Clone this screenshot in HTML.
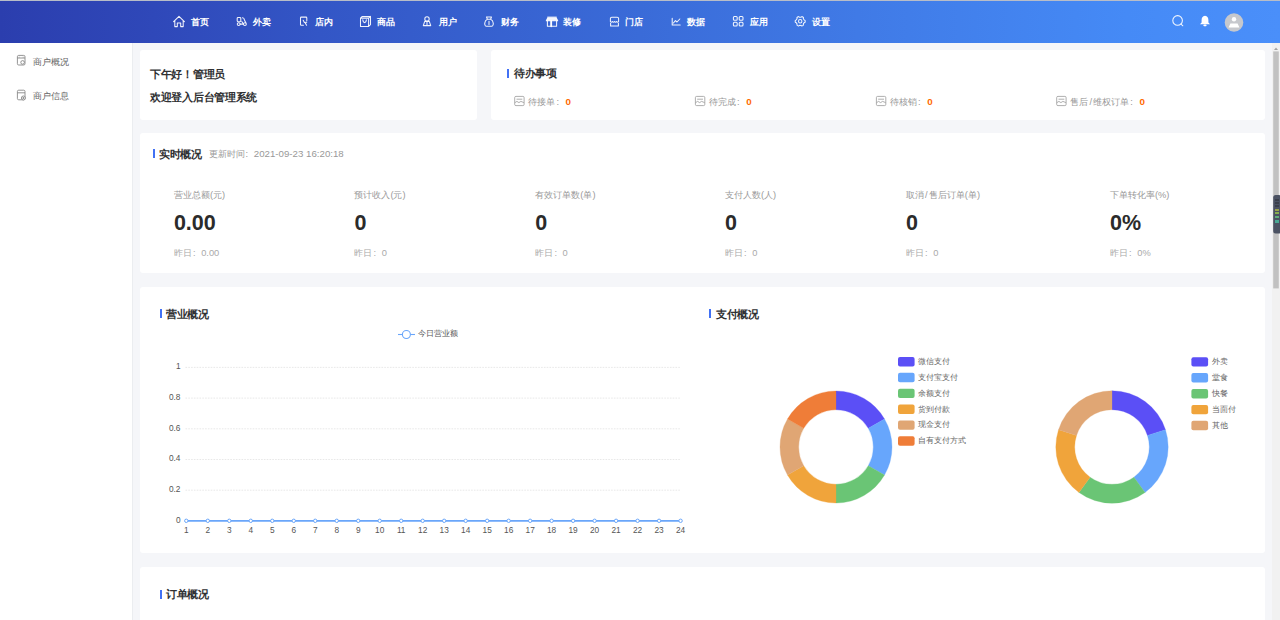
<!DOCTYPE html>
<html><head><meta charset="utf-8"><style>
*{box-sizing:border-box;margin:0;padding:0}
html,body{width:1280px;height:620px;overflow:hidden}
body{background:#f5f6f9;font-family:"Liberation Sans",sans-serif;position:relative;color:#333}
.a{position:absolute;white-space:nowrap;line-height:1}
#hdr{position:absolute;left:0;top:0;width:1280px;height:43px;background:linear-gradient(90deg,#2b3eae 0%,#2f48b9 12%,#3356c6 25%,#3a6bd8 50%,#407ae6 67%,#458af6 88%,#4a8ffa 100%);border-top:1px solid #b8bdc8}
.nv{color:#fff;font-size:9.4px;font-weight:bold}
#side{position:absolute;left:0;top:43px;width:133px;height:577px;background:#fff;border-right:1px solid #ebedf0}
.card{position:absolute;background:#fff;border-radius:3px}
.tbar{position:absolute;width:2px;height:9px;background:#4271f4}
.ttl{font-size:10.7px;font-weight:bold;color:#303133;letter-spacing:-0.3px}
.lbl{font-size:9.3px;color:#999}
.val{font-size:21.5px;font-weight:bold;color:#2b2b2b}
.yd{font-size:9.3px;color:#aaa}
.td{font-size:9.3px;color:#999}
.tz{font-size:9.8px;color:#ff6a00;font-weight:bold;margin-left:1px}
.sm{font-size:8px;color:#666}
#sb{position:absolute;left:1272px;top:43px;width:8px;height:577px;background:#f1f1f1}
svg{position:absolute;overflow:visible}
.c{display:inline-block;width:1em;font-family:"Liberation Sans",sans-serif;padding-left:0.12em}
</style></head><body>
<div id="hdr"></div>
<svg style="left:0;top:0" width="1280" height="43" viewBox="0 0 1280 43"><g stroke="#fff" fill="none" stroke-width="1.05" stroke-opacity="0.93" stroke-linejoin="round" stroke-linecap="round">
<path d="M173.6 21.6 L179 16.3 L184.4 21.6 M174.8 20.6 V26.6 H177.3 V23 H180.7 V26.6 H183.2 V20.6"/>
<rect x="237.2" y="17.4" width="3.6" height="4.3" rx="0.9"/><circle cx="238.7" cy="24.1" r="1.45"/><circle cx="244.9" cy="24.1" r="1.45"/><path d="M240.2 24.1 H243.4 L241.8 21.4 M242.4 17.8 C243.6 17.8 244.3 18.8 244.3 19.8 L245.8 22.8"/>
<path d="M303.4 25.2 H301.3 Q300.5 25.2 300.5 24.4 V17.9 Q300.5 17.1 301.3 17.1 H306 Q306.8 17.1 306.8 17.9 V20.8 M303.2 20.2 L304.4 22.4 L306.8 22.2 L305.3 23.3 L306.6 25.2"/>
<path d="M360.5 18.1 H368.6 V26.4 H360.5 Z M360.5 18.1 L362.3 16.4 H370.5 V24.6 L368.6 26.4 M368.6 18.1 L370.5 16.4 M362.8 19.8 Q363.2 22.6 364.6 22.6 Q366 22.6 366.4 19.8"/>
<circle cx="427" cy="18.9" r="2.2"/><path d="M423.3 25.6 L424.7 21.4 H429.3 L430.7 25.6 Z M427 21.8 V25.4"/>
<path d="M486.5 17 H491.5 L490.6 19.2 H487.4 Z M487.4 19.2 C484 20.5 484 26.3 486.5 26.3 H491.5 C494 26.3 494 20.5 490.6 19.2 M489 21.2 V24.5"/>
<path d="M547.6 16.9 H556.4" stroke-opacity="0.7"/><path d="M546.3 20.7 L547.8 17.8 H556.2 L557.7 20.7 Z" fill="#fff" fill-opacity="0.93"/><path d="M547.4 20.8 V26.3 H556.6 V20.8 M551.2 21 V26.3" /><path d="M551.2 21 V26.3" stroke-width="1.8"/>
<path d="M610.4 21.6 V18.6 Q610.4 17.2 611.8 17.2 H617.2 Q618.6 17.2 618.6 18.6 V21.6 M610.4 21.5 Q611.43 22.9 612.45 21.5 Q613.48 22.9 614.5 21.5 Q615.53 22.9 616.55 21.5 Q617.58 22.9 618.6 21.5 M610.6 23.2 V25.9 H618.4 V23.2"/>
<path d="M672.2 18.2 V25 H680.2 M673.4 23 L675.4 20.6 L677 22 L679.8 19"/>
<rect x="733.4" y="16.4" width="3.8" height="3.8" rx="1"/><rect x="739.2" y="16.4" width="3.8" height="3.8" rx="1"/><rect x="733.4" y="22.2" width="3.8" height="3.8" rx="1"/><rect x="739.2" y="22.2" width="3.8" height="3.8" rx="1"/>
<path d="M805.20 21.30 L805.12 22.17 L804.05 22.70 L803.75 23.35 L803.34 23.94 L803.41 25.13 L802.70 25.63 L801.91 26.00 L800.91 25.34 L800.20 25.40 L799.49 25.34 L798.49 26.00 L797.70 25.63 L796.99 25.13 L797.06 23.94 L796.65 23.35 L796.35 22.70 L795.28 22.17 L795.20 21.30 L795.28 20.43 L796.35 19.90 L796.65 19.25 L797.06 18.66 L796.99 17.47 L797.70 16.97 L798.49 16.60 L799.49 17.26 L800.20 17.20 L800.91 17.26 L801.91 16.60 L802.70 16.97 L803.41 17.47 L803.34 18.66 L803.75 19.25 L804.05 19.90 L805.12 20.43 Z"/><circle cx="800.2" cy="21.3" r="1.7"/>
<circle cx="1177.6" cy="20.4" r="4.8"/><path d="M1181 24 L1182.8 25.8"/>
</g>
<path d="M1205 15.8 C1202.5 15.8 1201.6 18 1201.6 20.3 V22.6 L1200 24.2 H1210 L1208.4 22.6 V20.3 C1208.4 18 1207.5 15.8 1205 15.8 Z" fill="#fff"/>
<rect x="1203.4" y="24.6" width="3.2" height="1.6" rx="0.8" fill="#fff"/>
<circle cx="1234" cy="22.5" r="9.3" fill="#c6c8cd"/>
<circle cx="1234" cy="19.3" r="2.2" fill="#fff"/>
<path d="M1228.6 27.5 L1230.4 23.5 H1237.6 L1239.4 27.5 Z" fill="#fff"/>
</svg>
<div class="a nv" style="left:190.8px;top:17px;">首页</div>
<div class="a nv" style="left:252.88px;top:17px;">外卖</div>
<div class="a nv" style="left:314.96px;top:17px;">店内</div>
<div class="a nv" style="left:377.04px;top:17px;">商品</div>
<div class="a nv" style="left:439.12px;top:17px;">用户</div>
<div class="a nv" style="left:501.2px;top:17px;">财务</div>
<div class="a nv" style="left:563.28px;top:17px;">装修</div>
<div class="a nv" style="left:625.36px;top:17px;">门店</div>
<div class="a nv" style="left:687.44px;top:17px;">数据</div>
<div class="a nv" style="left:749.52px;top:17px;">应用</div>
<div class="a nv" style="left:811.6px;top:17px;">设置</div>
<div id="side"></div>
<svg style="left:0;top:0" width="133" height="120"><g stroke="#888" fill="none" stroke-width="0.9">
<rect x="17.4" y="55.4" width="7.6" height="9.6" rx="1.3"/><path d="M17.4 58 H25 M19.2 56.8 V57.4 M23.2 56.8 V57.4"/><circle cx="22.6" cy="62.4" r="1.8"/>
<rect x="17.4" y="90.2" width="7.6" height="9.6" rx="1.3"/><path d="M17.4 92.8 H25"/><circle cx="23.4" cy="98" r="2" fill="#fff"/><path d="M23.4 97 V99 M22.4 98 H24.4"/>
</g></svg>
<div class="a lbl" style="left:33px;top:57.5px;color:#666">商户概况</div>
<div class="a lbl" style="left:33px;top:92.2px;color:#666">商户信息</div>
<div class="card" style="left:140px;top:50px;width:337px;height:70px"></div>
<div class="card" style="left:491px;top:50px;width:774px;height:70px"></div>
<div class="card" style="left:140px;top:133px;width:1125px;height:140px"></div>
<div class="card" style="left:140px;top:287px;width:1125px;height:266px"></div>
<div class="card" style="left:140px;top:567px;width:1125px;height:73px"></div>
<div class="a ttl" style="left:150px;top:68.5px;">下午好！管理员</div>
<div class="a ttl" style="left:150px;top:91.5px;">欢迎登入后台管理系统</div>
<div class="tbar" style="left:507px;top:68.5px"></div>
<div class="a ttl" style="left:514px;top:67.7px;">待办事项</div>
<svg style="left:0;top:0" width="1" height="1"><g stroke="#999" fill="none" stroke-width="0.8"><rect x="514.6999999999999" y="96.4" width="9.4" height="9.2" rx="1.2"/><path d="M516.5 99.2 H522.3"/><path d="M514.9 102.6 L516.9 101.4 L518.9 102.6 L520.9 101.4 L523.9 102.6"/></g></svg>
<div class="a td" style="left:528.3px;top:96.8px;">待接单<span class="c">:</span><span class="tz">0</span></div>
<svg style="left:0;top:0" width="1" height="1"><g stroke="#999" fill="none" stroke-width="0.8"><rect x="695.4" y="96.4" width="9.4" height="9.2" rx="1.2"/><path d="M697.2 99.2 H703"/><path d="M695.6 102.6 L697.6 101.4 L699.6 102.6 L701.6 101.4 L704.6 102.6"/></g></svg>
<div class="a td" style="left:709px;top:96.8px;">待完成<span class="c">:</span><span class="tz">0</span></div>
<svg style="left:0;top:0" width="1" height="1"><g stroke="#999" fill="none" stroke-width="0.8"><rect x="876.4" y="96.4" width="9.4" height="9.2" rx="1.2"/><path d="M878.2 99.2 H884"/><path d="M876.6 102.6 L878.6 101.4 L880.6 102.6 L882.6 101.4 L885.6 102.6"/></g></svg>
<div class="a td" style="left:890px;top:96.8px;">待核销<span class="c">:</span><span class="tz">0</span></div>
<svg style="left:0;top:0" width="1" height="1"><g stroke="#999" fill="none" stroke-width="0.8"><rect x="1056.7" y="96.4" width="9.4" height="9.2" rx="1.2"/><path d="M1058.5 99.2 H1064.3"/><path d="M1056.8999999999999 102.6 L1058.8999999999999 101.4 L1060.8999999999999 102.6 L1062.8999999999999 101.4 L1065.8999999999999 102.6"/></g></svg>
<div class="a td" style="left:1070.3px;top:96.8px;">售后<span style="margin:0 0.12em">/</span>维权订单<span class="c">:</span><span class="tz">0</span></div>
<div class="tbar" style="left:153px;top:149.4px"></div>
<div class="a ttl" style="left:159px;top:148.6px;">实时概况</div>
<div class="a td" style="left:208.5px;top:149px;">更新时间<span class="c">:</span><span style="font-size:9.7px">2021-09-23 16:20:18</span></div>
<div class="a lbl" style="left:173.9px;top:190.5px;">营业总额(元)</div>
<div class="a val" style="left:173.9px;top:212.5px;">0.00</div>
<div class="a yd" style="left:173.9px;top:249px;">昨日<span class="c">:</span>0.00</div>
<div class="a lbl" style="left:354.4px;top:190.5px;">预计收入(元)</div>
<div class="a val" style="left:354.4px;top:212.5px;">0</div>
<div class="a yd" style="left:354.4px;top:249px;">昨日<span class="c">:</span>0</div>
<div class="a lbl" style="left:535.3px;top:190.5px;">有效订单数(单)</div>
<div class="a val" style="left:535.3px;top:212.5px;">0</div>
<div class="a yd" style="left:535.3px;top:249px;">昨日<span class="c">:</span>0</div>
<div class="a lbl" style="left:724.9px;top:190.5px;">支付人数(人)</div>
<div class="a val" style="left:724.9px;top:212.5px;">0</div>
<div class="a yd" style="left:724.9px;top:249px;">昨日<span class="c">:</span>0</div>
<div class="a lbl" style="left:906px;top:190.5px;">取消<span style="margin:0 0.12em">/</span>售后订单(单)</div>
<div class="a val" style="left:906px;top:212.5px;">0</div>
<div class="a yd" style="left:906px;top:249px;">昨日<span class="c">:</span>0</div>
<div class="a lbl" style="left:1110px;top:190.5px;">下单转化率(%)</div>
<div class="a val" style="left:1110px;top:212.5px;">0%</div>
<div class="a yd" style="left:1110px;top:249px;">昨日<span class="c">:</span>0%</div>
<div class="tbar" style="left:160px;top:309.4px"></div>
<div class="a ttl" style="left:166px;top:308.59999999999997px;">营业概况</div>
<div class="tbar" style="left:709px;top:309.4px"></div>
<div class="a ttl" style="left:716px;top:308.59999999999997px;">支付概况</div>
<div class="tbar" style="left:160px;top:590px"></div>
<div class="a ttl" style="left:166px;top:589.2px;">订单概况</div>
<svg style="left:0;top:0" width="1280" height="620" font-family="Liberation Sans, sans-serif" font-size="8.3" fill="#555"><line x1="185.5" y1="367.4" x2="681" y2="367.4" stroke="#e2e2e2" stroke-width="0.8" stroke-dasharray="1.6 1.2"/><text x="180.5" y="369.3" text-anchor="end">1</text><line x1="185.5" y1="398.1" x2="681" y2="398.1" stroke="#e2e2e2" stroke-width="0.8" stroke-dasharray="1.6 1.2"/><text x="180.5" y="400.0" text-anchor="end">0.8</text><line x1="185.5" y1="428.8" x2="681" y2="428.8" stroke="#e2e2e2" stroke-width="0.8" stroke-dasharray="1.6 1.2"/><text x="180.5" y="430.7" text-anchor="end">0.6</text><line x1="185.5" y1="459.5" x2="681" y2="459.5" stroke="#e2e2e2" stroke-width="0.8" stroke-dasharray="1.6 1.2"/><text x="180.5" y="461.4" text-anchor="end">0.4</text><line x1="185.5" y1="490.2" x2="681" y2="490.2" stroke="#e2e2e2" stroke-width="0.8" stroke-dasharray="1.6 1.2"/><text x="180.5" y="492.1" text-anchor="end">0.2</text><text x="180.5" y="523.1" text-anchor="end">0</text><line x1="186.3" y1="520.8" x2="680.6" y2="520.8" stroke="#6aa6fa" stroke-width="1.7"/><circle cx="186.30" cy="520.8" r="1.7" fill="#fff" stroke="#6aa6fa" stroke-width="1"/><text x="186.30" y="532.8" text-anchor="middle">1</text><circle cx="207.79" cy="520.8" r="1.7" fill="#fff" stroke="#6aa6fa" stroke-width="1"/><text x="207.79" y="532.8" text-anchor="middle">2</text><circle cx="229.28" cy="520.8" r="1.7" fill="#fff" stroke="#6aa6fa" stroke-width="1"/><text x="229.28" y="532.8" text-anchor="middle">3</text><circle cx="250.77" cy="520.8" r="1.7" fill="#fff" stroke="#6aa6fa" stroke-width="1"/><text x="250.77" y="532.8" text-anchor="middle">4</text><circle cx="272.26" cy="520.8" r="1.7" fill="#fff" stroke="#6aa6fa" stroke-width="1"/><text x="272.26" y="532.8" text-anchor="middle">5</text><circle cx="293.75" cy="520.8" r="1.7" fill="#fff" stroke="#6aa6fa" stroke-width="1"/><text x="293.75" y="532.8" text-anchor="middle">6</text><circle cx="315.24" cy="520.8" r="1.7" fill="#fff" stroke="#6aa6fa" stroke-width="1"/><text x="315.24" y="532.8" text-anchor="middle">7</text><circle cx="336.73" cy="520.8" r="1.7" fill="#fff" stroke="#6aa6fa" stroke-width="1"/><text x="336.73" y="532.8" text-anchor="middle">8</text><circle cx="358.22" cy="520.8" r="1.7" fill="#fff" stroke="#6aa6fa" stroke-width="1"/><text x="358.22" y="532.8" text-anchor="middle">9</text><circle cx="379.71" cy="520.8" r="1.7" fill="#fff" stroke="#6aa6fa" stroke-width="1"/><text x="379.71" y="532.8" text-anchor="middle">10</text><circle cx="401.20" cy="520.8" r="1.7" fill="#fff" stroke="#6aa6fa" stroke-width="1"/><text x="401.20" y="532.8" text-anchor="middle">11</text><circle cx="422.69" cy="520.8" r="1.7" fill="#fff" stroke="#6aa6fa" stroke-width="1"/><text x="422.69" y="532.8" text-anchor="middle">12</text><circle cx="444.18" cy="520.8" r="1.7" fill="#fff" stroke="#6aa6fa" stroke-width="1"/><text x="444.18" y="532.8" text-anchor="middle">13</text><circle cx="465.67" cy="520.8" r="1.7" fill="#fff" stroke="#6aa6fa" stroke-width="1"/><text x="465.67" y="532.8" text-anchor="middle">14</text><circle cx="487.16" cy="520.8" r="1.7" fill="#fff" stroke="#6aa6fa" stroke-width="1"/><text x="487.16" y="532.8" text-anchor="middle">15</text><circle cx="508.65" cy="520.8" r="1.7" fill="#fff" stroke="#6aa6fa" stroke-width="1"/><text x="508.65" y="532.8" text-anchor="middle">16</text><circle cx="530.14" cy="520.8" r="1.7" fill="#fff" stroke="#6aa6fa" stroke-width="1"/><text x="530.14" y="532.8" text-anchor="middle">17</text><circle cx="551.63" cy="520.8" r="1.7" fill="#fff" stroke="#6aa6fa" stroke-width="1"/><text x="551.63" y="532.8" text-anchor="middle">18</text><circle cx="573.12" cy="520.8" r="1.7" fill="#fff" stroke="#6aa6fa" stroke-width="1"/><text x="573.12" y="532.8" text-anchor="middle">19</text><circle cx="594.61" cy="520.8" r="1.7" fill="#fff" stroke="#6aa6fa" stroke-width="1"/><text x="594.61" y="532.8" text-anchor="middle">20</text><circle cx="616.10" cy="520.8" r="1.7" fill="#fff" stroke="#6aa6fa" stroke-width="1"/><text x="616.10" y="532.8" text-anchor="middle">21</text><circle cx="637.59" cy="520.8" r="1.7" fill="#fff" stroke="#6aa6fa" stroke-width="1"/><text x="637.59" y="532.8" text-anchor="middle">22</text><circle cx="659.08" cy="520.8" r="1.7" fill="#fff" stroke="#6aa6fa" stroke-width="1"/><text x="659.08" y="532.8" text-anchor="middle">23</text><circle cx="680.57" cy="520.8" r="1.7" fill="#fff" stroke="#6aa6fa" stroke-width="1"/><text x="680.57" y="532.8" text-anchor="middle">24</text><line x1="398" y1="334.5" x2="415" y2="334.5" stroke="#6aa6fa" stroke-width="1.1"/><circle cx="406.4" cy="334.5" r="4" fill="#fff" stroke="#6aa6fa" stroke-width="1.1"/></svg>
<div class="a sm" style="left:418px;top:330px;font-size:8px;color:#555">今日营业额</div>
<svg style="left:0;top:0" width="1280" height="620"><path d="M836.00 391.00 A56 56 0 0 1 884.50 419.00 L868.30 428.35 A37.3 37.3 0 0 0 836.00 409.70 Z" fill="#5b4ff6" stroke="#5b4ff6" stroke-width="0.3"/><path d="M884.50 419.00 A56 56 0 0 1 884.50 475.00 L868.30 465.65 A37.3 37.3 0 0 0 868.30 428.35 Z" fill="#67a6fc" stroke="#67a6fc" stroke-width="0.3"/><path d="M884.50 475.00 A56 56 0 0 1 836.00 503.00 L836.00 484.30 A37.3 37.3 0 0 0 868.30 465.65 Z" fill="#6ac575" stroke="#6ac575" stroke-width="0.3"/><path d="M836.00 503.00 A56 56 0 0 1 787.50 475.00 L803.70 465.65 A37.3 37.3 0 0 0 836.00 484.30 Z" fill="#f0a43b" stroke="#f0a43b" stroke-width="0.3"/><path d="M787.50 475.00 A56 56 0 0 1 787.50 419.00 L803.70 428.35 A37.3 37.3 0 0 0 803.70 465.65 Z" fill="#e0a674" stroke="#e0a674" stroke-width="0.3"/><path d="M787.50 419.00 A56 56 0 0 1 836.00 391.00 L836.00 409.70 A37.3 37.3 0 0 0 803.70 428.35 Z" fill="#ef7d38" stroke="#ef7d38" stroke-width="0.3"/><path d="M1112.00 390.80 A56.2 56.2 0 0 1 1165.45 429.63 L1147.47 435.47 A37.3 37.3 0 0 0 1112.00 409.70 Z" fill="#5b4ff6" stroke="#5b4ff6" stroke-width="0.3"/><path d="M1165.45 429.63 A56.2 56.2 0 0 1 1145.03 492.47 L1133.92 477.18 A37.3 37.3 0 0 0 1147.47 435.47 Z" fill="#67a6fc" stroke="#67a6fc" stroke-width="0.3"/><path d="M1145.03 492.47 A56.2 56.2 0 0 1 1078.97 492.47 L1090.08 477.18 A37.3 37.3 0 0 0 1133.92 477.18 Z" fill="#6ac575" stroke="#6ac575" stroke-width="0.3"/><path d="M1078.97 492.47 A56.2 56.2 0 0 1 1058.55 429.63 L1076.53 435.47 A37.3 37.3 0 0 0 1090.08 477.18 Z" fill="#f0a43b" stroke="#f0a43b" stroke-width="0.3"/><path d="M1058.55 429.63 A56.2 56.2 0 0 1 1112.00 390.80 L1112.00 409.70 A37.3 37.3 0 0 0 1076.53 435.47 Z" fill="#e0a674" stroke="#e0a674" stroke-width="0.3"/><rect x="898" y="357.00" width="16.6" height="9.4" rx="2" fill="#5b4ff6"/><rect x="898" y="372.85" width="16.6" height="9.4" rx="2" fill="#67a6fc"/><rect x="898" y="388.70" width="16.6" height="9.4" rx="2" fill="#6ac575"/><rect x="898" y="404.55" width="16.6" height="9.4" rx="2" fill="#f0a43b"/><rect x="898" y="420.40" width="16.6" height="9.4" rx="2" fill="#e0a674"/><rect x="898" y="436.25" width="16.6" height="9.4" rx="2" fill="#ef7d38"/><rect x="1191.4" y="357.20" width="16.7" height="9.4" rx="2" fill="#5b4ff6"/><rect x="1191.4" y="373.10" width="16.7" height="9.4" rx="2" fill="#67a6fc"/><rect x="1191.4" y="389.00" width="16.7" height="9.4" rx="2" fill="#6ac575"/><rect x="1191.4" y="404.90" width="16.7" height="9.4" rx="2" fill="#f0a43b"/><rect x="1191.4" y="420.80" width="16.7" height="9.4" rx="2" fill="#e0a674"/></svg>
<div class="a sm" style="left:918px;top:358.0px;font-size:8px;color:#666">微信支付</div>
<div class="a sm" style="left:918px;top:373.85px;font-size:8px;color:#666">支付宝支付</div>
<div class="a sm" style="left:918px;top:389.7px;font-size:8px;color:#666">余额支付</div>
<div class="a sm" style="left:918px;top:405.55px;font-size:8px;color:#666">货到付款</div>
<div class="a sm" style="left:918px;top:421.4px;font-size:8px;color:#666">现金支付</div>
<div class="a sm" style="left:918px;top:437.25px;font-size:8px;color:#666">自有支付方式</div>
<div class="a sm" style="left:1211.5px;top:358.2px;font-size:8px;color:#666">外卖</div>
<div class="a sm" style="left:1211.5px;top:374.1px;font-size:8px;color:#666">堂食</div>
<div class="a sm" style="left:1211.5px;top:390.0px;font-size:8px;color:#666">快餐</div>
<div class="a sm" style="left:1211.5px;top:405.9px;font-size:8px;color:#666">当面付</div>
<div class="a sm" style="left:1211.5px;top:421.8px;font-size:8px;color:#666">其他</div>
<div id="sb"></div>
<svg style="left:1272px;top:43px" width="8" height="577">
<path d="M2 7 L4 4.6 L6 7 Z" fill="#a3a3a3"/>
<rect x="1.2" y="8.4" width="5.6" height="237" fill="#c1c1c1"/>
<rect x="1.2" y="152" width="8" height="38.5" rx="2.5" fill="#4b5263"/>
<rect x="3" y="156" width="4" height="2" fill="#3a3f4a"/><rect x="3" y="159" width="4" height="2" fill="#3a3f4a"/><rect x="3" y="162" width="4" height="2" fill="#3a3f4a"/>
<rect x="3" y="166" width="4" height="2" fill="#9aa24a"/><rect x="3" y="169" width="4" height="2" fill="#86ad4f"/><rect x="3" y="173" width="4" height="2" fill="#5fae7a"/><rect x="3" y="177" width="4" height="3" fill="#4aa894"/>
</svg>
</body></html>
